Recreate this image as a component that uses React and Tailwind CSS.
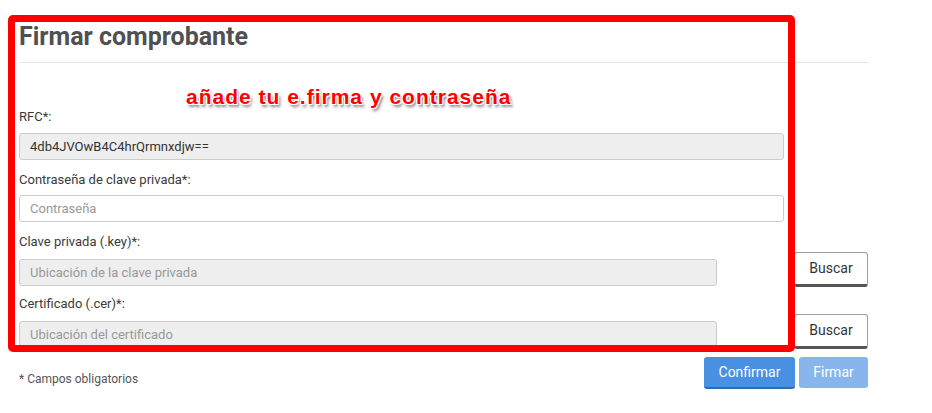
export default function App() {
    const label = "block text-[13px] leading-[20px] text-[#3a3a3a]";
    const inputBase = "w-full h-[27px] px-[10px] border border-[#ccc] rounded-[3px] text-[13px] text-[#333] placeholder:text-[#999] outline-none";

    return (
        <div className="relative w-[932px] h-[413px] bg-white overflow-hidden font-['Roboto',sans-serif]">
            <div className="ml-[19px] w-[849px] pt-[23px]">
                {/* Header */}
                <h1 className="text-[25px] leading-[28px] font-bold text-[#505050]">Firmar comprobante</h1>
                <div className="mt-[11px] border-t border-[#e5e5e5]" />

                {/* RFC */}
                <div className="mt-[44px] pr-[84px]">
                    <label className={label}>RFC*:</label>
                    <input
                        type="text"
                        readOnly
                        value="4db4JVOwB4C4hrQrmnxdjw=="
                        className={`${inputBase} mt-[6px] bg-[#eee]`}
                    />
                </div>

                {/* Contraseña */}
                <div className="mt-[10px] pr-[84px]">
                    <label className={label}>Contraseña de clave privada*:</label>
                    <input
                        type="password"
                        placeholder="Contraseña"
                        className={`${inputBase} mt-[5px] bg-white`}
                    />
                </div>

                {/* Clave privada */}
                <div className="mt-[10px]">
                    <label className={label}>Clave privada (.key)*:</label>
                    <div className="flex items-end">
                        <input
                            type="text"
                            readOnly
                            placeholder="Ubicación de la clave privada"
                            className={`${inputBase} !w-[698px] mb-px bg-[#eee] rounded-[2px]`}
                        />
                        <button className="ml-auto w-[74px] h-[35px] bg-white border border-[#a0a0a0] border-b-[3px] border-b-[#555] rounded-[3px] text-[14px] text-[#333]">
                            Buscar
                        </button>
                    </div>
                </div>

                {/* Certificado */}
                <div className="mt-[7px]">
                    <label className={label}>Certificado (.cer)*:</label>
                    <div className="flex items-end">
                        <input
                            type="text"
                            readOnly
                            placeholder="Ubicación del certificado"
                            className={`${inputBase} !w-[698px] mb-px bg-[#eee] rounded-[2px]`}
                        />
                        <button className="ml-auto w-[74px] h-[35px] bg-white border border-[#a0a0a0] border-b-[3px] border-b-[#555] rounded-[3px] text-[14px] text-[#333]">
                            Buscar
                        </button>
                    </div>
                </div>

                {/* Footer */}
                <div className="mt-[8px] flex items-start">
                    <p className="mt-[14px] text-[12px] leading-[16px] text-[#555]">* Campos obligatorios</p>
                    <div className="ml-auto flex gap-[4px]">
                        <button className="w-[91px] h-[32px] bg-[#4a90e2] border-b-2 border-[#2f6db5] rounded-[3px] text-[14px] text-white">
                            Confirmar
                        </button>
                        <button disabled className="w-[69px] h-[31px] bg-[#4a90e2] opacity-65 rounded-[3px] text-[14px] text-white">
                            Firmar
                        </button>
                    </div>
                </div>
            </div>

            {/* Annotation overlay */}
            <div className="absolute left-[8px] top-[15px] w-[787px] h-[337px] border-[7px] border-[#ff0000] rounded-[5px] pointer-events-none" />
            <div className="absolute left-[186px] top-[85px] text-[21px] leading-[24px] tracking-[1px] font-bold text-[#ff0000] font-['Liberation_Sans',Arial,sans-serif] [text-shadow:-1px_-1px_0_#fff,1px_-1px_0_#fff,-1px_1px_0_#fff,1px_1px_0_#fff,2px_3px_3px_#777]">
                añade tu e.firma y contraseña
            </div>
        </div>
    );
}
